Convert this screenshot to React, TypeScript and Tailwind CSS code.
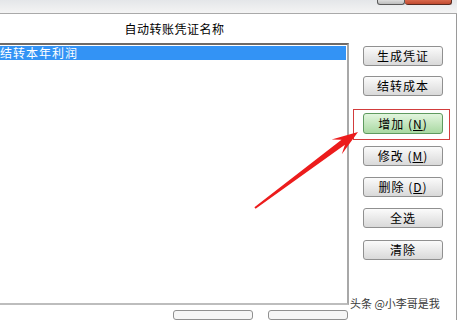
import React from "react";

const font = { fontFamily: '"Noto Sans CJK SC", "Noto Sans", sans-serif' };

function Btn({ children, green = false }: { children: React.ReactNode; green?: boolean }) {
  return (
    <div
      className={
        green
          ? "w-[80px] h-[21px] rounded-[3px] border border-[#5f9a5f] bg-linear-to-b from-[#e2f5de] to-[#a9d9a2] flex items-center justify-center text-[12px] leading-none text-black tracking-[1px]"
          : "w-[80px] h-[20px] rounded-[3px] border border-[#909090] bg-linear-to-b from-[#fbfbfb] to-[#d9d9d9] flex items-center justify-center text-[12px] leading-none text-black tracking-[1px]"
      }
    >
      {children}
    </div>
  );
}

export default function App() {
  return (
    <div className="relative w-[457px] h-[320px] overflow-hidden bg-white" style={font}>
      {/* title bar */}
      <div className="h-[14px] bg-linear-to-b from-[#e4e6e9] to-[#f4f4f4] flex justify-end items-start pr-[5px] border-b border-[#a9a9a9]">
        <div className="w-[28px] h-[5px] border border-t-0 border-[#5a5a5a] rounded-b-[3px] bg-linear-to-b from-[#dcdcdc] to-[#bdbdbd]" />
        <div className="w-[47px] h-[5px] border border-t-0 border-l-0 border-[#5a2a20] rounded-b-[3px] bg-linear-to-b from-[#d9684c] to-[#c04a30]" />
      </div>

      <div className="flex h-[306px]">
        {/* left column */}
        <div className="w-[349px] flex flex-col">
          <div className="h-[30px] flex items-center justify-center text-[12px] text-black tracking-[0.5px]">
            自动转账凭证名称
          </div>
          <div className="h-[268px] border-t-2 border-t-[#6f6a66] border-r-2 border-r-[#a8a8a8] border-b-2 border-b-[#bdbdbd] bg-white pt-px">
            <div className="h-[14px] bg-[#3393f5] text-white text-[12px] leading-[14px] tracking-[1px] mr-px">
              结转本年利润
            </div>
          </div>
          <div className="flex mt-[5px] pl-[173px] gap-[15px]">
            <div className="w-[80px] h-[10px] rounded-[3px] border border-[#909090] bg-[#f6f6f6]" />
            <div className="w-[80px] h-[10px] rounded-[3px] border border-[#909090] bg-[#f6f6f6]" />
          </div>
        </div>

        {/* right column */}
        <div className="flex-1 border-r border-[#9a9a9a] flex flex-col pt-[32px]">
          <div className="pl-[14px]">
            <Btn>生成凭证</Btn>
          </div>
          <div className="pl-[14px] mt-[10px]">
            <Btn>结转成本</Btn>
          </div>
          <div className="ml-[4px] mt-[13px] w-[97px] h-[31px] bg-[#d23c3c] p-px">
            <div className="w-full h-full bg-white pl-[9px] pt-[3px]">
              <Btn green>
                增加 (<u>N</u>)
              </Btn>
            </div>
          </div>
          <div className="pl-[14px] mt-[6px]">
            <Btn>
              修改 (<u>M</u>)
            </Btn>
          </div>
          <div className="pl-[14px] mt-[11px]">
            <Btn>
              删除 (<u>D</u>)
            </Btn>
          </div>
          <div className="pl-[14px] mt-[11px]">
            <Btn>全选</Btn>
          </div>
          <div className="pl-[14px] mt-[12px]">
            <Btn>清除</Btn>
          </div>
          <div className="mt-[36px] pl-px text-[11px] leading-[14px] text-[#3a3a3a] whitespace-nowrap">
            头条 @小李哥是我
          </div>
        </div>
      </div>

      {/* red annotation arrow */}
      <svg className="absolute left-0 top-0 pointer-events-none" width="457" height="320" viewBox="0 0 457 320">
        <polygon
          points="255.6,208.8 344.9,144.8 341.8,154.2 358,132 331.6,139.4 341.5,139.8 254.4,207.2"
          fill="#ec1c1c"
        />
      </svg>
    </div>
  );
}
